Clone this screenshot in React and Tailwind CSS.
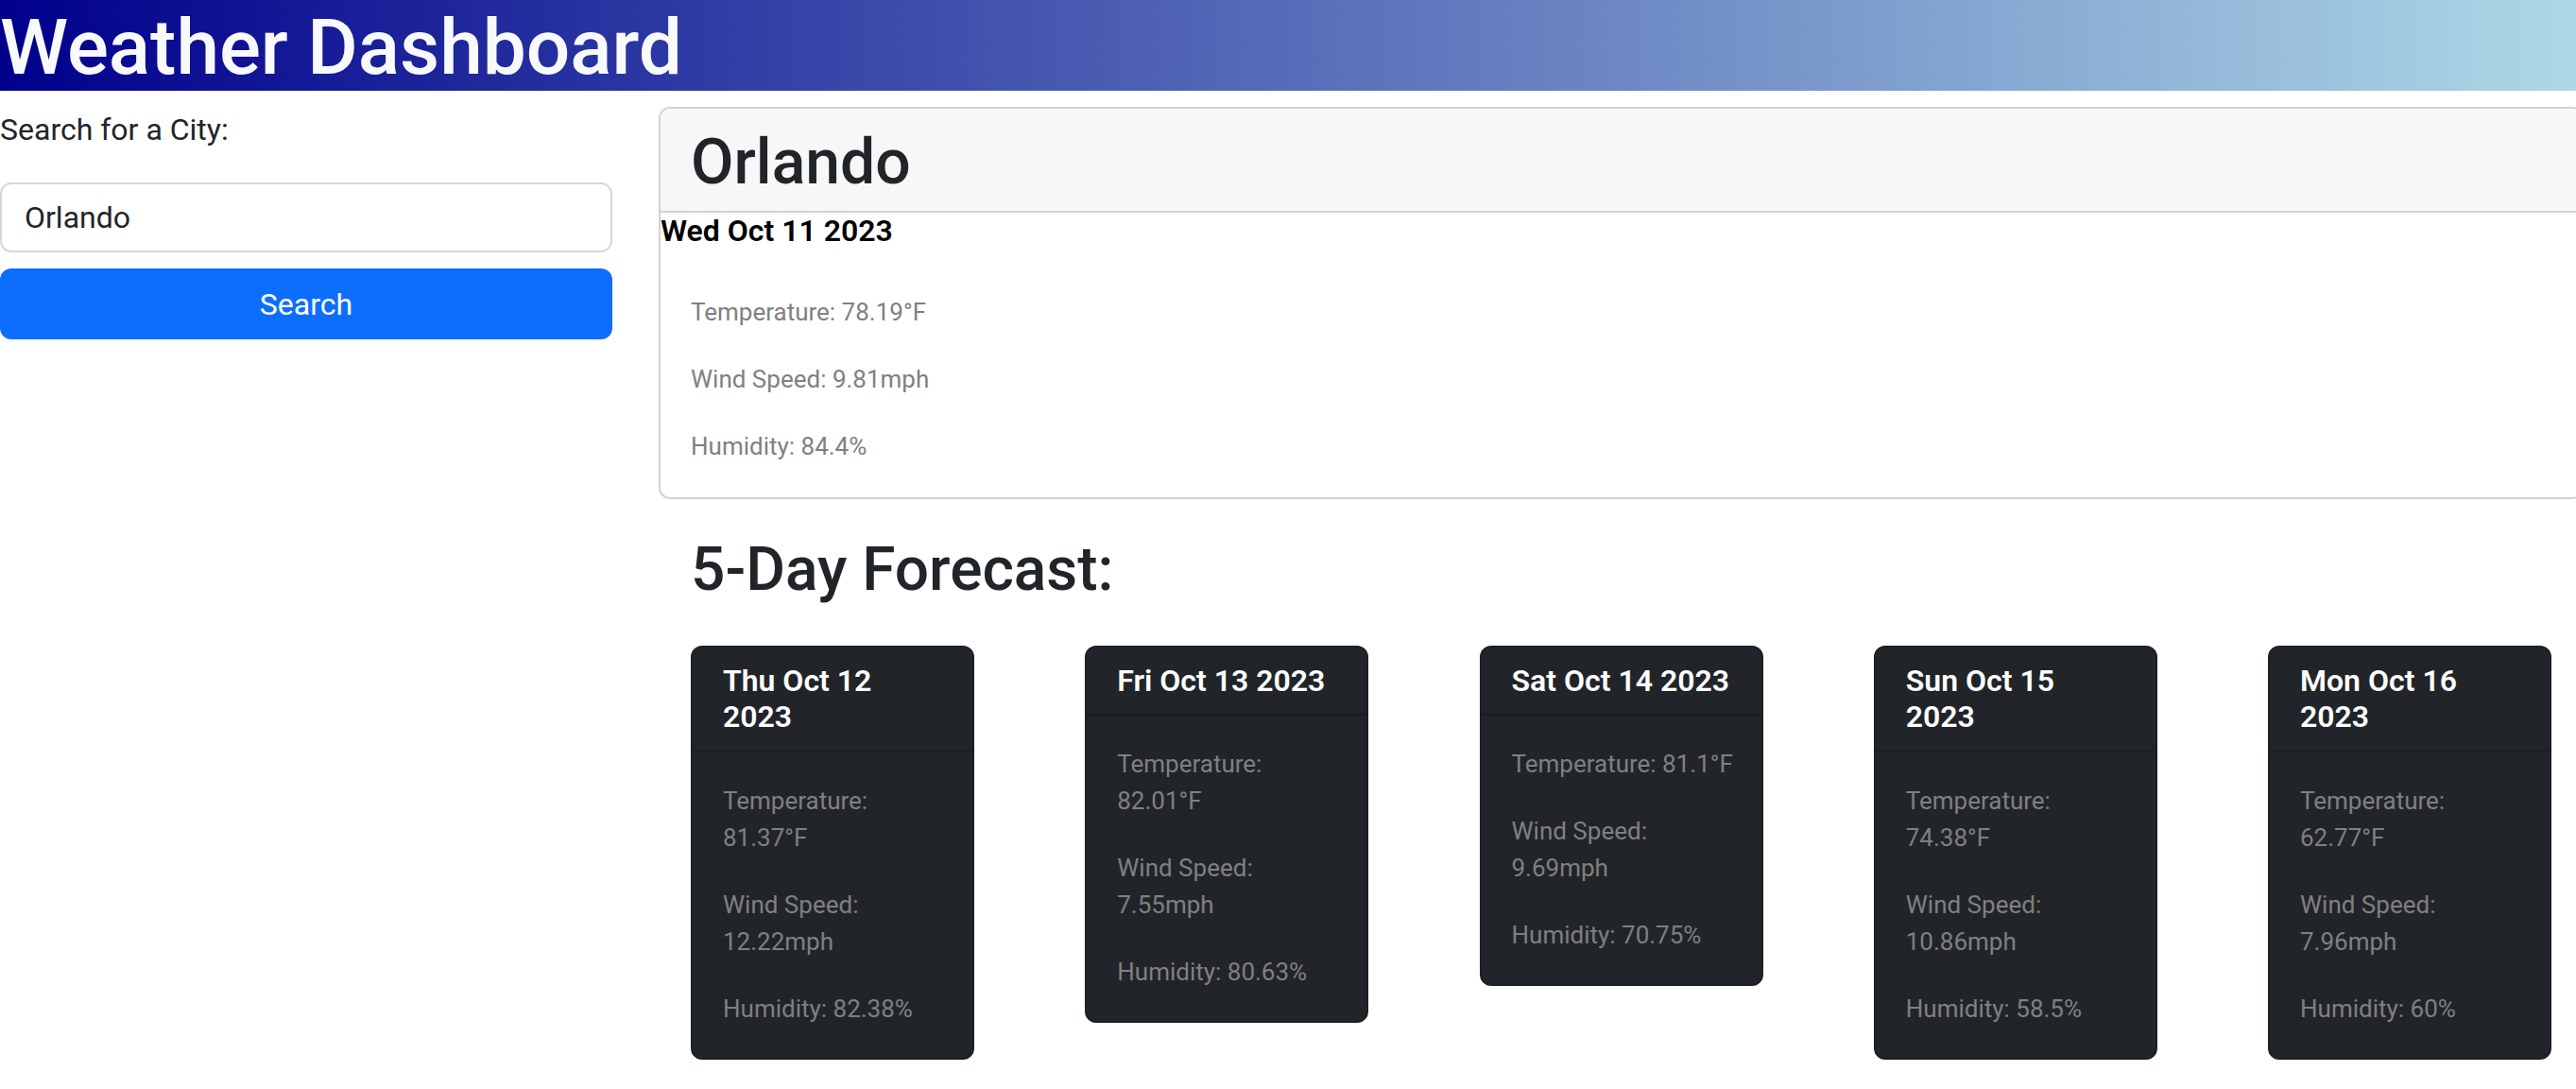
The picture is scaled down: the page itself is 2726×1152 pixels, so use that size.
import React, { useState } from 'react';

const forecast = [
  { date: ['Thu Oct 12', '2023'], temp: ['Temperature:', '81.37°F'], wind: ['Wind Speed:', '12.22mph'], humidity: ['Humidity: 82.38%'] },
  { date: ['Fri Oct 13 2023'], temp: ['Temperature:', '82.01°F'], wind: ['Wind Speed:', '7.55mph'], humidity: ['Humidity: 80.63%'] },
  { date: ['Sat Oct 14 2023'], temp: ['Temperature: 81.1°F'], wind: ['Wind Speed:', '9.69mph'], humidity: ['Humidity: 70.75%'] },
  { date: ['Sun Oct 15', '2023'], temp: ['Temperature:', '74.38°F'], wind: ['Wind Speed:', '10.86mph'], humidity: ['Humidity: 58.5%'] },
  { date: ['Mon Oct 16', '2023'], temp: ['Temperature:', '62.77°F'], wind: ['Wind Speed:', '7.96mph'], humidity: ['Humidity: 60%'] },
];

// each text line on its own row, the reference wraps them this way
const Lines = ({ lines }) =>
  lines.map((line, i) => (
    <span key={i} className="block whitespace-nowrap">
      {line}
    </span>
  ));

const ForecastCard = ({ day }) => (
  <div className="w-[300px] shrink-0 rounded-[12px] border-2 border-[#1d2024] bg-[#212529]">
    <div className="border-b-2 border-[#1a1d20] px-[32px] py-[16px]">
      <h5 className="text-[32px] font-semibold leading-[38.4px] text-white">
        <Lines lines={day.date} />
      </h5>
    </div>
    <div className="p-[32px] text-[26px] leading-[39px] text-[#808080]">
      <p className="mb-[32px]"><Lines lines={day.temp} /></p>
      <p className="mb-[32px]"><Lines lines={day.wind} /></p>
      <p><Lines lines={day.humidity} /></p>
    </div>
  </div>
);

const App = () => {
  const [city, setCity] = useState('Orlando');

  return (
    <div className="w-[2726px] min-h-[1152px] overflow-hidden bg-white font-['Roboto','Liberation_Sans',sans-serif] text-[#212529]">
      <header className="h-[96px] bg-[linear-gradient(to_right,#00008b,#add8e6)] pt-[5px]">
        <h1 className="whitespace-nowrap text-[82px] font-medium leading-[91px] text-[#f8f9fa]">Weather Dashboard</h1>
      </header>

      <div className="flex">
        {/* search column */}
        <div className="w-[648px] shrink-0 pt-[17px]">
          <label className="block text-[32px] leading-[48px]">Search for a City:</label>
          <input
            value={city}
            onChange={(e) => setCity(e.target.value)}
            className="mt-[32px] block h-[74px] w-full rounded-[12px] border-2 border-[#d4d7db] px-[24px] text-[32px] text-[#212529] outline-none"
          />
          <button className="mt-[17px] block h-[75px] w-full rounded-[12px] bg-[#0d6efd] text-[32px] text-white">
            Search
          </button>
        </div>

        {/* weather column */}
        <div className="ml-[49px] flex-1 pt-[17px]">
          <div className="rounded-[12px] border-2 border-[#d2d2d2]">
            <div className="rounded-t-[10px] border-b-2 border-[#d2d2d2] bg-[#f7f7f7] px-[32px] pb-[13px] pt-[19px]">
              <h2 className="text-[66px] font-medium leading-[76px]">{city}</h2>
            </div>
            <h6 className="mb-[16px] text-[32px] font-semibold leading-[38px] text-black">Wed Oct 11 2023</h6>
            <div className="px-[32px] pb-[34px] pt-[32px] text-[26px] leading-[39px] text-[#808080]">
              <p className="mb-[32px]">Temperature: 78.19°F</p>
              <p className="mb-[32px]">Wind Speed: 9.81mph</p>
              <p>Humidity: 84.4%</p>
            </div>
          </div>

          <div className="px-[34px]">
            <h2 className="mt-[36px] text-[64px] font-medium leading-[77px]">5-Day Forecast:</h2>
            <div className="mt-[42px] flex items-start gap-[117.25px]">
              {forecast.map((day) => (
                <ForecastCard key={day.date.join(' ')} day={day} />
              ))}
            </div>
          </div>
        </div>
      </div>
    </div>
  );
};

export default App;
